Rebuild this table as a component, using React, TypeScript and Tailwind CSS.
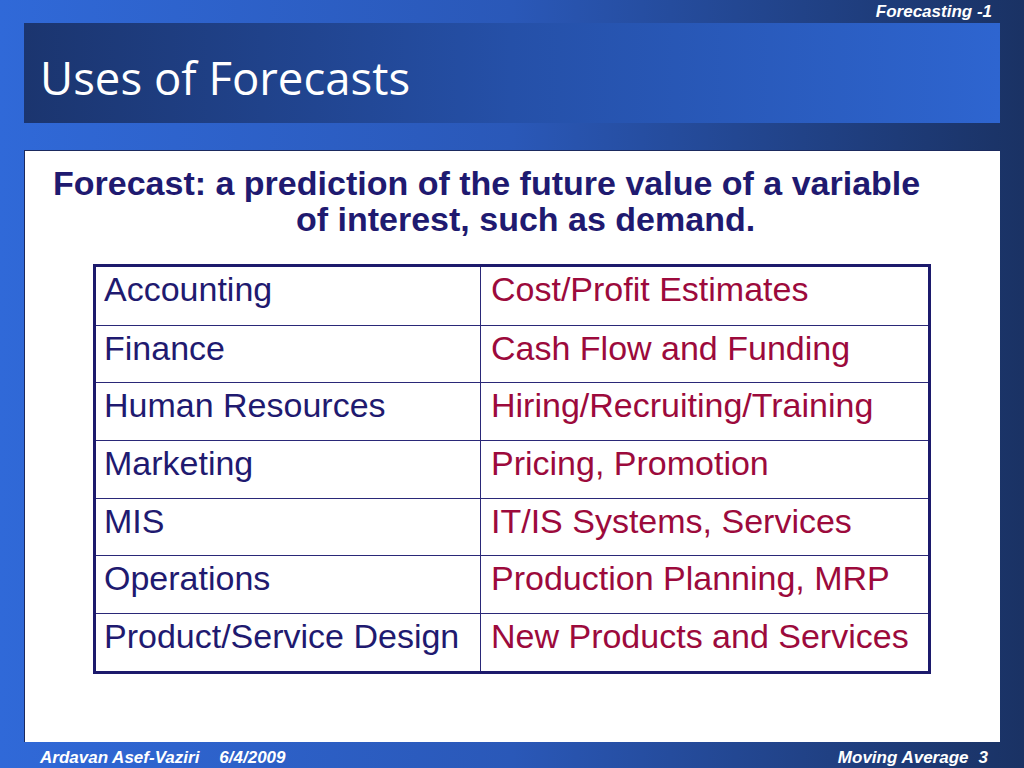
import React from "react";

const rows: [string, string][] = [
  ["Accounting", "Cost/Profit Estimates"],
  ["Finance", "Cash Flow and Funding"],
  ["Human Resources", "Hiring/Recruiting/Training"],
  ["Marketing", "Pricing, Promotion"],
  ["MIS", "IT/IS Systems, Services"],
  ["Operations", "Production Planning, MRP"],
  ["Product/Service Design", "New Products and Services"],
];

export default function App() {
  return (
    <div
      className="w-[1024px] h-[768px] flex flex-col bg-gradient-to-r from-[#3069d8] via-[#2a58b8] to-[#1a3264] overflow-hidden"
      style={{ fontFamily: '"Liberation Sans", Arial, sans-serif' }}
    >
      <div className="h-[23px] flex items-center justify-end pr-[32px]">
        <span className="text-white font-bold italic text-[17px] leading-none">Forecasting -1</span>
      </div>
      <div className="mx-[24px] h-[100px] flex items-center pl-[16px] bg-gradient-to-r from-[#1b356f] via-[#2550a8] to-[#2e65d0]">
        <span
          className="text-white text-[45.5px] leading-none pt-[10px]"
          style={{ fontFamily: '"Open Sans", sans-serif' }}
        >
          Uses of Forecasts
        </span>
      </div>
      <div className="mt-[27px] mx-[24px] h-[592px] bg-white border-t border-l border-[#1b2a5e] flex flex-col">
        <div className="pt-[14px] pl-[28px] text-[#1f1a70] font-bold text-[34px] leading-[36px]">
          <div>Forecast: a prediction of the future value of a variable</div>
          <div className="pl-[243px]">of interest, such as demand.</div>
        </div>
        <div className="mt-[27px] ml-[68px] w-[838px] border-[3px] border-[#1c1a6c] flex flex-col">
          {rows.map(([a, b], i) => (
            <div
              key={a}
              className={`flex h-[57.7px] ${i > 0 ? "border-t border-[#2a2878]" : ""}`}
            >
              <div className="w-[385px] border-r-[1.5px] border-[#2a2878] pl-[8px] pt-[4px] text-[34px] leading-[36px] text-[#1f1a70] whitespace-nowrap">
                {a}
              </div>
              <div className="flex-1 pl-[10px] pt-[4px] text-[34px] leading-[36px] text-[#9c0a3c] whitespace-nowrap">
                {b}
              </div>
            </div>
          ))}
        </div>
      </div>
      <div className="flex-1 flex items-center justify-between pt-[4px] pl-[40px] pr-[36px] text-white font-bold italic text-[17px] leading-none">
        <span>
          Ardavan Asef-Vaziri<span className="inline-block w-[20px]"></span>6/4/2009
        </span>
        <span>
          Moving Average<span className="inline-block w-[10px]"></span>3
        </span>
      </div>
    </div>
  );
}
